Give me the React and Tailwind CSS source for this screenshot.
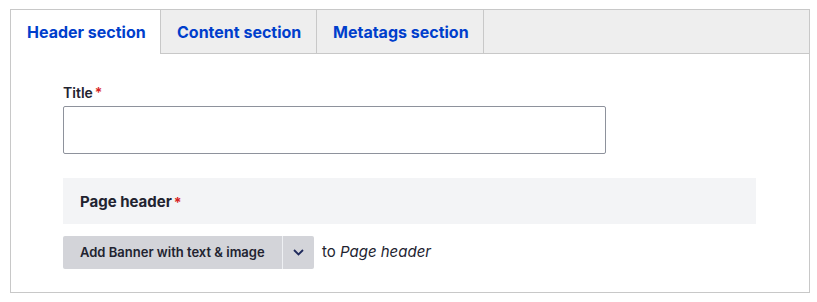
import React from "react";

export default function App() {
  return (
    <div className="w-[817px] h-[302px] bg-white pt-[9px] pl-[10px]" style={{ fontFamily: "Inter, 'Noto Sans', sans-serif" }}>
      <div className="w-[800px] h-[284px] border border-[#c8c8c8] flex flex-col">
        <div className="flex h-[44px] bg-[#eeeeee] border-b border-[#c8c8c8]">
          <div className="w-[150px] h-[44px] bg-white border-r border-[#c8c8c8] flex items-center pl-[16px] text-[16px] font-bold text-[#003ecc]">
            Header section
          </div>
          <div className="w-[156px] h-[43px] border-r border-[#c8c8c8] flex items-center pl-[16px] text-[16px] font-bold text-[#003ecc]">
            Content section
          </div>
          <div className="w-[167px] h-[43px] border-r border-[#c8c8c8] flex items-center pl-[16px] text-[16px] font-bold text-[#003ecc]">
            Metatags section
          </div>
        </div>
        <div className="pl-[52px] pt-[30px]">
          <div className="flex items-center h-[16px] text-[14px] font-semibold text-[#222330]">
            Title<span className="text-[#d72222] ml-[2px] text-[14px]">*</span>
          </div>
          <div className="mt-[6px] w-[543px] h-[48px] border border-[#8e929c] rounded-[2px] bg-white"></div>
          <div className="mt-[24px] w-[693px] h-[46px] bg-[#f3f4f6] flex items-center pl-[17px] pt-[3px] text-[15px] font-bold text-[#222330]">
            Page header<span className="text-[#d72222] ml-[2px] text-[14px]">*</span>
          </div>
          <div className="mt-[12px] flex items-center">
            <div className="flex h-[33px] bg-[#d3d4d9] rounded-[2px]">
              <div className="w-[219px] flex items-center pl-[17px] text-[13px] font-semibold text-[#222330]">
                Add Banner with text &amp; image
              </div>
              <div className="w-px bg-[#eef0f3]"></div>
              <div className="w-[31px] flex items-center justify-center">
                <svg width="11" height="7" viewBox="0 0 11 7" fill="none">
                  <path d="M1 1l4.5 4.5L10 1" stroke="#1f2a5c" strokeWidth="1.8" />
                </svg>
              </div>
            </div>
            <div className="ml-[8px] text-[15px] text-[#222330]">
              to <span className="italic">Page header</span>
            </div>
          </div>
        </div>
      </div>
    </div>
  );
}
